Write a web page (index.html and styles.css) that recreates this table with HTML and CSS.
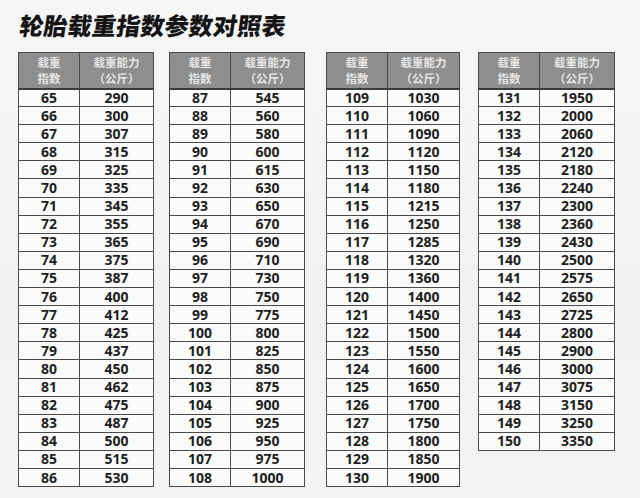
FILE: index.html
```html
<!DOCTYPE html>
<html lang="zh">
<head>
<meta charset="utf-8">
<link rel="stylesheet" href="styles.css">
</head>
<body>
<h1 class="title"><span class="title-text">轮胎载重指数参数对照表</span></h1>
<div class="tables" id="tables"></div>
<script src="app.js"></script>
</body>
</html>
```
FILE: styles.css
```css
html, body {
  margin: 0;
  padding: 0;
}
body {
  width: 640px;
  height: 498px;
  overflow: hidden;
  background: linear-gradient(180deg, #f6f6f6 0%, #f1f1f1 60%, #f3f3f3 100%);
  font-family: "Open Sans", "Noto Sans CJK SC", sans-serif;
}
.title {
  margin: 0;
  padding: 12px 0 0 18px;
  height: 40px;
  box-sizing: border-box;
  font-family: "Noto Sans CJK SC", sans-serif;
  font-weight: 900;
  font-size: 24px;
  line-height: 26px;
  letter-spacing: 0.2px;
  color: #141414;
}
.title-text {
  display: inline-block;
  transform: skewX(-8deg);
  transform-origin: left bottom;
}
.tables {
  display: flex;
  align-items: flex-start;
  gap: 15px;
  padding: 12px 0 0 18px;
}
.load {
  border-collapse: collapse;
  width: 136px;
  table-layout: fixed;
  background: #fbfbfb;
}
.load.t3 { margin-left: 6px; width: 134px; }
.load.t4 { margin-left: 3px; width: 137px; }
.load col.c1 { width: 61px; }
.load th {
  background: #8e8e8e;
  color: #e6e6e6;
  font-family: "Noto Sans CJK SC", sans-serif;
  font-weight: 700;
  font-size: 11.5px;
  line-height: 16px;
  height: 36px;
  padding: 0;
  border: 1px solid #4a4a4a;
  border-bottom: 2px solid #3c3c3c;
  box-sizing: border-box;
}
.load th .ln {
  display: block;
}
.load td {
  height: 18.1px;
  padding: 0;
  border: 1px solid #4a4a4a;
  text-align: center;
  font-weight: 700;
  font-size: 14px;
  line-height: 16px;
  color: #1e1e1e;
  box-sizing: border-box;
}
```
FILE: app.js
```js
const data = [
  [65,290],[66,300],[67,307],[68,315],[69,325],[70,335],[71,345],[72,355],[73,365],[74,375],[75,387],[76,400],[77,412],[78,425],[79,437],[80,450],[81,462],[82,475],[83,487],[84,500],[85,515],[86,530],
  [87,545],[88,560],[89,580],[90,600],[91,615],[92,630],[93,650],[94,670],[95,690],[96,710],[97,730],[98,750],[99,775],[100,800],[101,825],[102,850],[103,875],[104,900],[105,925],[106,950],[107,975],[108,1000],
  [109,1030],[110,1060],[111,1090],[112,1120],[113,1150],[114,1180],[115,1215],[116,1250],[117,1285],[118,1320],[119,1360],[120,1400],[121,1450],[122,1500],[123,1550],[124,1600],[125,1650],[126,1700],[127,1750],[128,1800],[129,1850],[130,1900],
  [131,1950],[132,2000],[133,2060],[134,2120],[135,2180],[136,2240],[137,2300],[138,2360],[139,2430],[140,2500],[141,2575],[142,2650],[143,2725],[144,2800],[145,2900],[146,3000],[147,3075],[148,3150],[149,3250],[150,3350]
];
const wrap = document.getElementById('tables');
for (let t = 0; t < 4; t++) {
  const rows = data.slice(t * 22, t * 22 + 22);
  const table = document.createElement('table');
  table.className = 'load t' + (t + 1);
  let html = '<colgroup><col class="c1"><col class="c2"></colgroup>';
  html += '<thead><tr><th><span class="ln">载重</span><span class="ln">指数</span></th><th><span class="ln">载重能力</span><span class="ln">（公斤）</span></th></tr></thead><tbody>';
  for (const [a, b] of rows) html += '<tr><td>' + a + '</td><td>' + b + '</td></tr>';
  html += '</tbody>';
  table.innerHTML = html;
  wrap.appendChild(table);
}
```
